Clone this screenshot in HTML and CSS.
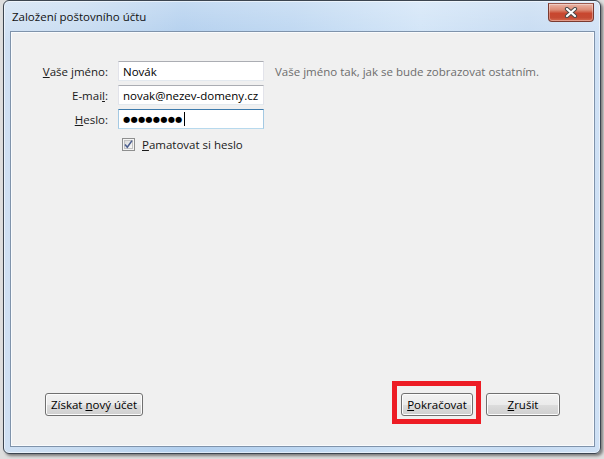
FILE: index.html
```html
<!DOCTYPE html>
<html lang="cs">
<head>
  <meta charset="UTF-8" />
  <title>Založení poštovního účtu</title>
  <link rel="stylesheet" href="styles.css">
</head>
<body>
  <div class="window">
    <div class="titlebar">
      <span class="title">Založení poštovního účtu</span>
      <button class="close" title="Zavřít">
        <svg width="14" height="11" viewBox="0 0 14 11">
          <path d="M3 2 L11 9 M11 2 L3 9" stroke="#4a4a4a" stroke-width="4.2" stroke-linecap="round"/>
          <path d="M3 2 L11 9 M11 2 L3 9" stroke="#ffffff" stroke-width="2.2" stroke-linecap="round"/>
        </svg>
      </button>
    </div>

    <div class="content">
      <div class="form">
        <label class="label"><u>V</u>aše jméno:</label>
        <div class="field">Novák</div>
        <span class="hint">Vaše jméno tak, jak se bude zobrazovat ostatním.</span>

        <label class="label">E-mai<u>l</u>:</label>
        <div class="field">novak@nezev-domeny.cz</div>
        <span></span>

        <label class="label"><u>H</u>eslo:</label>
        <div class="field focused"><span class="dots">●●●●●●●●</span><span class="caret"></span></div>
        <span></span>

        <div class="remember">
          <svg class="check" width="13" height="13" viewBox="0 0 13 13">
            <defs>
              <linearGradient id="box" x1="0" y1="0" x2="1" y2="1">
                <stop offset="0" stop-color="#d8d8d8"/>
                <stop offset="1" stop-color="#fbfbfb"/>
              </linearGradient>
            </defs>
            <rect x="0.5" y="0.5" width="12" height="12" fill="#f4f4f4" stroke="#8e8f8f"/>
            <rect x="2.5" y="2.5" width="8" height="8" fill="url(#box)" stroke="#c2c2c2"/>
            <path d="M3 6.5 L5.3 9.2 L10 2.6" fill="none" stroke="#4c5f8f" stroke-width="1.6"/>
          </svg>
          <span><u>P</u>amatovat si heslo</span>
        </div>
      </div>

      <div class="actions">
        <button class="btn btn-account">Získat <u>n</u>ový účet</button>
        <div class="actions-right">
          <span class="marked"><button class="btn btn-next"><u>P</u>okračovat</button></span>
          <button class="btn btn-cancel"><u>Z</u>rušit</button>
        </div>
      </div>
    </div>
  </div>
</body>
</html>
```

FILE: styles.css
```css
body {
  margin: 0;
  height: 459px;
  background: #dedede;
  font-family: 'Open Sans', 'Noto Sans', sans-serif;
  font-size: 11.5px;
  color: #1a1a1a;
  overflow: hidden;
}

/* Aero glass frame */
.window {
  margin-left: 3px;
  width: 596px;
  height: 452px;
  border: 1px solid #3c4550;
  border-radius: 6px;
  background:
    linear-gradient(180deg, rgba(255, 255, 255, 0.25), rgba(255, 255, 255, 0) 40px),
    linear-gradient(90deg, #cfe0f3 0%, #c8dcf1 12%, #b2cfee 30%, #bcd6f1 48%, #d1e4f7 70%, #c6dbf2 88%, #cfe1f5 100%);
  box-shadow: 2px 2px 3px rgba(0, 0, 0, 0.45), inset 0 0 0 1px rgba(255, 255, 255, 0.55);
  display: flex;
  flex-direction: column;
}

.titlebar {
  height: 30px;
  display: flex;
  justify-content: space-between;
  align-items: flex-start;
  padding: 0 6px 0 8px;
}

.title {
  margin-top: 8px;
  font-size: 11.5px;
  color: #111;
}

.close {
  margin-top: 2px;
  width: 46px;
  height: 19px;
  padding: 0;
  border: 1px solid #7a3a30;
  border-top-color: #9c5a4f;
  border-radius: 0 0 4px 4px;
  background: linear-gradient(180deg, #eab4a6 0%, #dc8a74 35%, #c8472f 55%, #c54a33 80%, #d66a50 100%);
  box-shadow: inset 0 0 0 1px rgba(255, 255, 255, 0.35);
  display: flex;
  align-items: center;
  justify-content: center;
}

.close svg {
  display: block;
}

/* client area */
.content {
  flex: 1;
  margin: 0 5px 6px 6px;
  border: 1px solid #7f93ab;
  box-shadow: inset 0 0 0 1px #f9fbfd;
  background: #f0f0f0;
  display: flex;
  flex-direction: column;
}

.form {
  display: grid;
  grid-template-columns: 97px 146px auto;
  grid-auto-rows: 20px;
  column-gap: 10px;
  row-gap: 4px;
  padding-top: 29px;
  align-items: center;
}

.label {
  text-align: right;
}

.field {
  height: 20px;
  box-sizing: border-box;
  border: 1px solid #abadb3;
  border-color: #abadb3 #e2e3ea #e3e9ef #e2e3ea;
  background: #fff;
  padding: 0 4px;
  display: flex;
  align-items: center;
  white-space: nowrap;
  overflow: hidden;
  color: #000;
}

.field.focused {
  border-color: #3d7bad #a4c9e3 #b7d9ed #a4c9e3;
}

.dots {
  font-family: 'DejaVu Sans', sans-serif;
  font-size: 8.2px;
  letter-spacing: 0.3px;
}

.caret {
  width: 1px;
  height: 14px;
  margin-left: 1px;
  background: #000;
}

.hint {
  margin-left: 1px;
  color: #6d6d6d;
  white-space: nowrap;
}

.remember {
  grid-column: 2 / 4;
  margin-top: 2px;
  padding-left: 4px;
  display: flex;
  align-items: center;
  gap: 7px;
}

.check {
  display: block;
}

/* bottom buttons */
.actions {
  margin-top: auto;
  padding: 0 34px 30px 34px;
  display: flex;
  justify-content: space-between;
  align-items: flex-end;
}

.actions-right {
  display: flex;
  gap: 13px;
}

.btn {
  height: 23px;
  padding: 0;
  font-family: inherit;
  font-size: 11.5px;
  color: #000;
  border: 1px solid #707070;
  border-radius: 3px;
  background: linear-gradient(180deg, #f2f2f2 0%, #ebebeb 50%, #dddddd 51%, #cfcfcf 100%);
  box-shadow: inset 0 0 0 1px #fcfcfc;
}

.btn-account {
  width: 98px;
}

.btn-next {
  width: 72px;
}

.btn-cancel {
  width: 74px;
}

.marked {
  position: relative;
  display: flex;
}

/* red annotation frame around the continue button */
.marked::after {
  content: '';
  position: absolute;
  top: -12px;
  left: -9px;
  right: -8px;
  bottom: -8px;
  border: 5px solid #ed1c24;
  pointer-events: none;
}
```
